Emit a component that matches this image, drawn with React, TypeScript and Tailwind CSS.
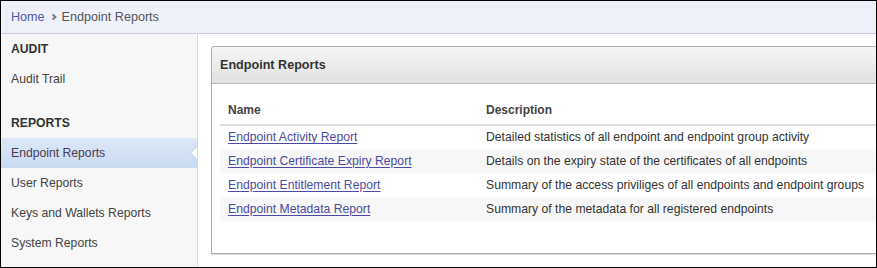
const reports = [
  {
    name: 'Endpoint Activity Report',
    description: 'Detailed statistics of all endpoint and endpoint group activity',
  },
  {
    name: 'Endpoint Certificate Expiry Report',
    description: 'Details on the expiry state of the certificates of all endpoints',
  },
  {
    name: 'Endpoint Entitlement Report',
    description: 'Summary of the access priviliges of all endpoints and endpoint groups',
  },
  {
    name: 'Endpoint Metadata Report',
    description: 'Summary of the metadata for all registered endpoints',
  },
];

const reportLinks = ['Endpoint Reports', 'User Reports', 'Keys and Wallets Reports', 'System Reports'];

const App = () => {
  return (
    <div
      className="w-[877px] h-[268px] overflow-hidden border border-black bg-white flex flex-col text-[12.2px] text-[#333]"
      style={{ fontFamily: '"Liberation Sans", Arial, sans-serif' }}
    >
      {/* Breadcrumb */}
      <div className="h-[33px] shrink-0 flex items-center pl-[10px] bg-[#eef1f9] border-b border-[#c6ccd9] text-[12.6px]">
        <a className="text-[#5457a6]">Home</a>
        <svg className="w-[8px] h-[8px] ml-[5px] mr-[4px]" viewBox="0 0 8 8" fill="none">
          <path d="M2.5 1.5L5.5 4L2.5 6.5" stroke="#777" strokeWidth="1.8" />
        </svg>
        <span className="text-[#555]">Endpoint Reports</span>
      </div>

      <div className="flex flex-1 min-h-0">
        {/* Sidebar */}
        <div className="w-[197px] shrink-0 bg-[#f7f7f7] border-r border-[#d6d6d6] flex flex-col">
          <div className="h-[30px] flex items-center px-[10px] font-bold text-[#333]">AUDIT</div>
          <div className="h-[30px] flex items-center px-[10px] text-[#444]">Audit Trail</div>
          <div className="h-[30px] mt-[14px] flex items-center px-[10px] font-bold text-[#333]">REPORTS</div>
          {reportLinks.map((label, i) =>
            i === 0 ? (
              <div
                key={label}
                className="relative h-[30px] flex items-center px-[10px] text-[#4a3a55] bg-gradient-to-b from-[#dce8f7] to-[#c9daf1]"
              >
                {label}
                <span className="absolute right-0 top-[8px] w-0 h-0 border-y-[7px] border-y-transparent border-r-[7px] border-r-[#c4cad3]" />
                <span className="absolute right-0 top-[9px] w-0 h-0 border-y-[6px] border-y-transparent border-r-[6px] border-r-[#fbfbfb]" />
              </div>
            ) : (
              <div key={label} className="h-[30px] flex items-center px-[10px] text-[#444]">
                {label}
              </div>
            ),
          )}
        </div>

        {/* Content */}
        <div className="flex-1 min-w-0 overflow-hidden pl-[13px] pt-[12px]">
          <div className="w-[680px] border border-[#a9a9a9] rounded-tl-[3px] shadow-[0_1px_1px_rgba(0,0,0,0.15)] bg-white">
            <div className="h-[37px] flex items-center pl-[8px] font-bold text-[12.6px] text-[#333] bg-gradient-to-b from-[#f6f6f6] to-[#e1e1e1] border-b border-[#b9b9b9] rounded-tl-[3px]">
              Endpoint Reports
            </div>
            <div className="pt-[11px] pb-[32px] pl-[8px]">
              <table className="w-full table-fixed border-collapse">
                <thead>
                  <tr className="border-b-2 border-[#dddddd]">
                    <th className="w-[258px] h-[30px] px-[8px] text-left font-bold text-[12px] text-[#444]">Name</th>
                    <th className="h-[30px] px-[8px] text-left font-bold text-[12px] text-[#444]">Description</th>
                  </tr>
                </thead>
                <tbody>
                  {reports.map((r, i) => (
                    <tr key={r.name} className={i % 2 === 1 ? 'bg-[#f7f7f7]' : 'bg-white'}>
                      <td className="h-[24px] px-[8px] whitespace-nowrap">
                        <a className="text-[#4b4ba0] underline underline-offset-[2px]">{r.name}</a>
                      </td>
                      <td className="h-[24px] px-[8px] whitespace-nowrap text-[#333]">{r.description}</td>
                    </tr>
                  ))}
                </tbody>
              </table>
            </div>
          </div>
        </div>
      </div>
    </div>
  );
};

export default App;
